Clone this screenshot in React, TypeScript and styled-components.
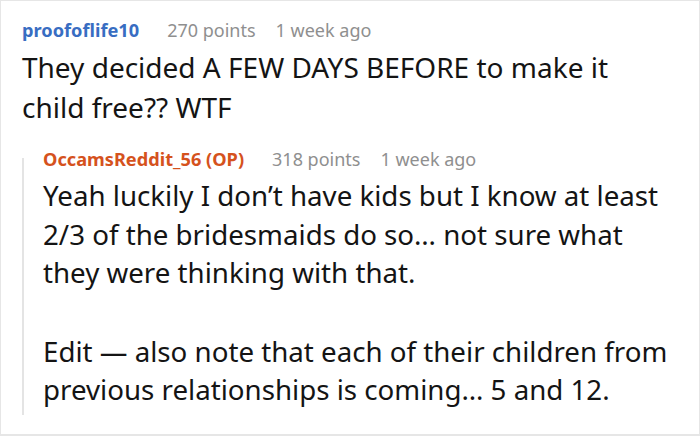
import styled, { createGlobalStyle } from "styled-components";

const Global = createGlobalStyle`
  html, body { margin: 0; padding: 0; background: #fff; }
  body { font-family: "Noto Sans", "Open Sans", sans-serif; }
`

const Frame = styled.div`
  box-sizing: border-box;
  width: 700px;
  height: 436px;
  overflow: hidden;
  border: 1px solid #e6e6e6;
  border-bottom-width: 2px;
  padding: 17px 23px 0 21px;
`

const Header = styled.div`
  display: flex;
  align-items: baseline;
  gap: 20px;
  line-height: 24px;
  white-space: nowrap;
`

const Author = styled.span<{ $color: string }>`
  font-size: 18.2px;
  font-weight: 700;
  color: ${p => p.$color};
  margin-right: 8px;
`

const Meta = styled.span`
  font-size: 18px;
  color: #8f8f8f;
`

const Body = styled.div<{ $size: number, $lh: number }>`
  font-size: ${p => p.$size}px;
  line-height: ${p => p.$lh}px;
  color: #141414;
  margin-top: 5px;

  p { margin: 0; }
  p + p { margin-top: 40px; }
`

const Reply = styled.div`
  display: flex;
  margin-top: 20px;
`

const Thread = styled.div`
  flex: none;
  width: 2px;
  margin: 11px 19px 0 0;
  height: 257px;
  background: #e4e4e4;
`

type CommentProps = { author: string, color: string, points: number, size: number, lh: number, children: React.ReactNode }

const Comment = ({ author, color, points, size, lh, children }: CommentProps) => (
  <div>
    <Header>
      <Author $color={color}>{author}</Author>
      <Meta>{points} points</Meta>
      <Meta>1 week ago</Meta>
    </Header>
    <Body $size={size} $lh={lh}>{children}</Body>
  </div>
)

function App() {
  return (
    <Frame>
      <Global />
      <Comment author={'proofoflife10'} color={'#386dc2'} points={270} size={28} lh={40}>
        <p>They decided A FEW DAYS BEFORE to make it child free?? WTF</p>
      </Comment>
      <Reply>
        <Thread />
        <Comment author={'OccamsReddit_56 (OP)'} color={'#d5521d'} points={318} size={27.7} lh={38.5}>
          <p>Yeah luckily I don’t have kids but I know at least 2/3 of the bridesmaids do so… not sure what they were thinking with that.</p>
          <p>Edit — also note that each of their children from previous relationships is coming… 5 and 12.</p>
        </Comment>
      </Reply>
    </Frame>
  )
}

export default App
